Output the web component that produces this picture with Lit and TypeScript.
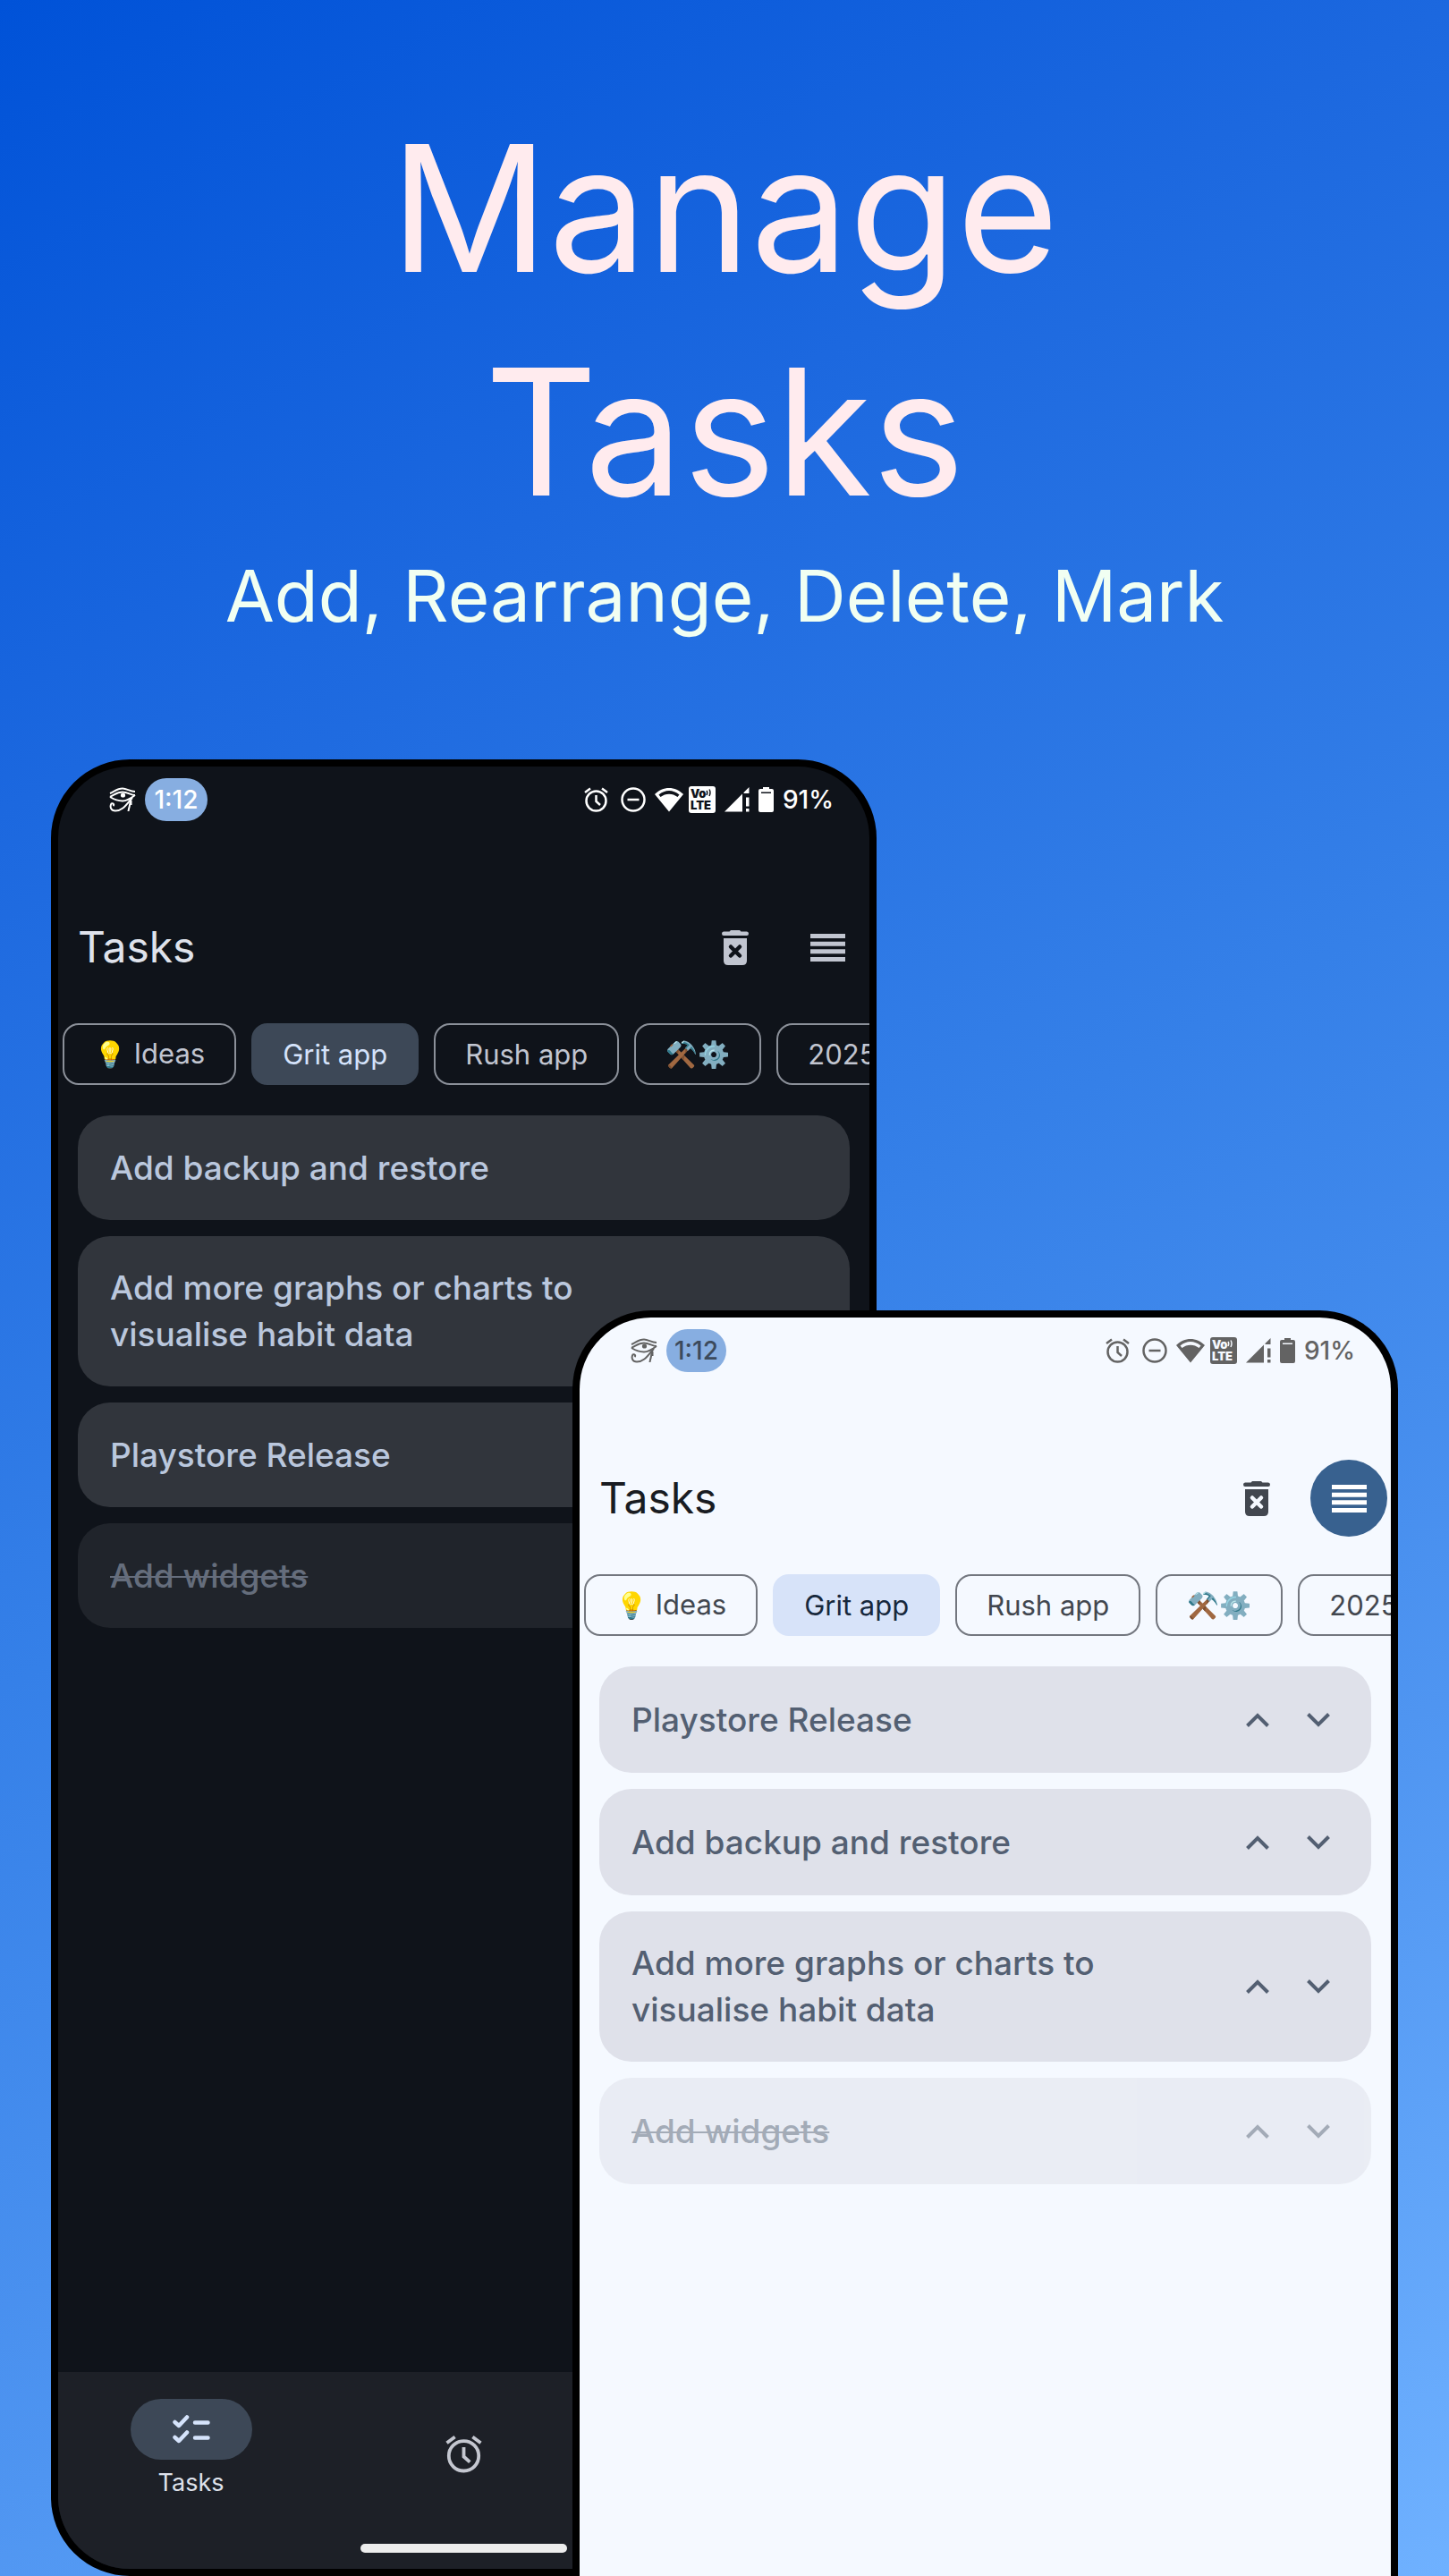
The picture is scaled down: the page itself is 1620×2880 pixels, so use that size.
import { LitElement, html, css, svg } from "lit";
import { customElement, property } from "lit/decorators.js";
import { classMap } from "lit/directives/class-map.js";

interface Task {
  title: string;
  done?: boolean;
}

interface Category {
  emoji?: string;
  label?: string;
  selected?: boolean;
}

const eyeIcon = svg`
  <svg class="eye" viewBox="0 0 30 28" fill="none" stroke="currentColor" stroke-width="2" stroke-linecap="butt">
    <path d="M1 7C6 5 9 1.500 15 1.500C20 1.500 23 5 29 5" />
    <path d="M1 11C7 8 9 5.500 15 5.500C21 5.500 24 9 29 9" />
    <path d="M1 11C6 14 10 15.500 15 15.500C21 15.500 25 12 29 9" />
    <circle cx="15.500" cy="9" r="2.600" fill="currentColor" stroke="none" />
    <path d="M26 12C20 18 16 26.500 7 26.500C2 26.500 0.500 22 2.500 18.500C4.500 17.500 6 19.500 4.500 21" />
    <path d="M23.500 14C24.500 19 22 22 21.500 27" />
    <path d="M24.500 15L24.500 20" />
  </svg>`;

const alarmIcon = svg`
  <svg class="alarm" viewBox="0 0 27 28" fill="none" stroke="currentColor" stroke-width="2.500">
    <circle cx="13.500" cy="15.500" r="11" />
    <path d="M13.500 9V16L18 20M1 6L7 1.500M26 6L20 1.500" />
  </svg>`;

const dndIcon = svg`
  <svg class="dnd" viewBox="0 0 28 28" fill="none" stroke="currentColor" stroke-width="2.500">
    <circle cx="14" cy="14" r="12.500" />
    <path d="M7.500 14H20.500" />
  </svg>`;

const wifiIcon = svg`
  <svg class="wifi" viewBox="0 0 32 28">
    <path fill="currentColor" fill-rule="evenodd" d="M16 27.500L0 8C9 -1.500 23 -1.500 32 8ZM4.500 8.500L6.500 11C12 6.500 20 6.500 25.500 11L27.500 8.500C20.500 2.500 11.500 2.500 4.500 8.500Z" />
  </svg>`;

const signalIcon = svg`
  <svg class="signal" viewBox="0 0 28 28" fill="currentColor">
    <path d="M0 27.500L20 7.500V27.500ZM21.500 6L27.500 0V7H21.500ZM24 11.500H27.500V21.500H24ZM24 24H27.500V27.500H24Z" />
  </svg>`;

const batteryIcon = svg`
  <svg class="battery" viewBox="0 0 17 28">
    <path fill="currentColor" fill-rule="evenodd" d="M5 0H12V2H15Q17 2 17 4V26Q17 28 15 28H2Q0 28 0 26V4Q0 2 2 2H5ZM3 5.500V7H14V5.500Z" />
  </svg>`;

const trashIcon = svg`
  <svg class="trash" viewBox="0 0 30 39">
    <path fill="currentColor" d="M2 1.500H8.500L10 0H20L21.500 1.500H28Q30 2 30 3.700Q30 6 28 6H2Q0 6 0 3.700Q0 2 2 1.500Z" />
    <path fill="currentColor" d="M2 9H28V34Q28 39 23 39H7Q2 39 2 34Z" />
    <path class="cross" d="M10 18.500L20 28.500M20 18.500L10 28.500" fill="none" stroke-width="4.500" stroke-linecap="round" />
  </svg>`;

const listIcon = svg`
  <svg class="list" viewBox="0 0 39 31" fill="currentColor">
    <path d="M0 0H39V5H0ZM0 8.700H39V13.700H0ZM0 17.300H39V22.300H0ZM0 26H39V31H0Z" />
  </svg>`;

const checklistIcon = svg`
  <svg class="checklist" viewBox="0 0 42 32" fill="none" stroke="currentColor" stroke-width="4.500" stroke-linecap="round" stroke-linejoin="round">
    <path d="M2.500 8L7 12L16 2.500M2.500 25L7 29L16 19.500" />
    <path d="M25 8.500H39.500M25 25.500H39.500" />
  </svg>`;

const chevron = (up: boolean) => svg`
  <svg class="chevron" viewBox="0 0 26 16" fill="none" stroke="currentColor" stroke-width="4">
    <path d=${up ? "M1.500 14.500L13 3L24.500 14.500" : "M1.500 1.500L13 13L24.500 1.500"} />
  </svg>`;

@customElement("phone-screen")
export class PhoneScreen extends LitElement {
  @property() theme: "dark" | "light" = "dark";
  @property({ type: Boolean }) reordering = false;
  @property({ type: Boolean }) cropped = false;
  @property({ attribute: false }) tasks: Task[] = [];

  private categories: Category[] = [
    { emoji: "💡", label: "Ideas" },
    { label: "Grit app", selected: true },
    { label: "Rush app" },
    { emoji: "⚒️⚙️" },
    { label: "2025" },
  ];

  static styles = css`
    :host {
      display: flex;
      min-width: 0;
      min-height: 0;
      isolation: isolate;
      font-family: Inter, "Noto Sans", sans-serif;
    }
    .phone {
      --screen: #0f131a;
      --text: #dfe2eb;
      --muted: #c1c5d0;
      --label: #c1c5d0;
      --outline: #8b9099;
      --chip: #3d4857;
      --chip-text: #d5e3fb;
      --card: #31353c;
      --card-text: #bac7dd;
      --status: #ffffff;
      --clock: #ffffff;
      flex: 1;
      min-width: 0;
      display: flex;
      flex-direction: column;
      box-sizing: border-box;
      overflow: hidden;
      border: 8px solid #000;
      border-radius: 88px;
      background: var(--screen);
      color: var(--text);
    }
    .light {
      --screen: #f5f9ff;
      --text: #191c22;
      --muted: #42474f;
      --label: #42474f;
      --outline: #73777f;
      --chip: #d7e3f9;
      --chip-text: #17283c;
      --card: #dfe1ea;
      --card-text: #535f72;
      --status: #636363;
      --clock: #3c4a5c;
    }
    .cropped {
      border-bottom: 0;
      border-radius: 88px 88px 0 0;
    }
    button {
      margin: 0;
      padding: 0;
      border: 0;
      background: none;
      color: inherit;
      font: inherit;
      flex: none;
    }
    svg {
      display: block;
      flex: none;
    }
    .status {
      display: flex;
      align-items: center;
      justify-content: space-between;
      height: 48px;
      padding: 13px 40px 0 57px;
      color: var(--status);
      font-size: 28px;
      font-weight: 500;
    }
    .status-side {
      display: flex;
      align-items: center;
      gap: 10px;
    }
    .clock {
      display: flex;
      align-items: center;
      justify-content: center;
      width: 70px;
      height: 48px;
      border-radius: 24px;
      background: #87aee1;
      color: var(--clock);
    }
    .light .clock {
      width: 67px;
    }
    .eye { width: 30px; height: 28px; }
    .alarm { width: 27px; height: 28px; }
    .dnd { width: 28px; height: 28px; margin-left: 4px; }
    .wifi { width: 32px; height: 28px; }
    .signal { width: 28px; height: 28px; }
    .battery { width: 17px; height: 28px; }
    .volte {
      display: flex;
      flex-direction: column;
      justify-content: center;
      box-sizing: border-box;
      width: 30px;
      height: 30px;
      margin-left: -4px;
      padding-left: 2px;
      border-radius: 3px;
      background: var(--status);
      color: var(--screen);
      font-size: 13px;
      font-weight: 900;
      line-height: 13px;
    }
    .volte-top {
      display: flex;
    }
    .waves { width: 8px; height: 10px; }
    .toolbar {
      display: flex;
      align-items: center;
      justify-content: space-between;
      height: 86px;
      padding: 98px 4px 0 22px;
    }
    h2 {
      margin: 0;
      font-size: 48px;
      font-weight: 400;
      line-height: 60px;
    }
    .actions {
      display: flex;
      align-items: center;
      gap: 17px;
      color: var(--muted);
    }
    .round {
      display: grid;
      place-items: center;
      width: 86px;
      height: 86px;
      border-radius: 50%;
    }
    .round.active {
      background: #38618f;
      color: #fff;
    }
    .trash { width: 30px; height: 39px; }
    .cross { stroke: var(--screen); }
    .list { width: 39px; height: 31px; }
    .chips {
      display: flex;
      gap: 17px;
      padding: 42px 0 0 5px;
      overflow: hidden;
    }
    .chip {
      box-sizing: border-box;
      height: 69px;
      padding: 0 33px;
      border: 2px solid var(--outline);
      border-radius: 18px;
      color: var(--label);
      font-size: 31px;
      line-height: 40px;
      white-space: nowrap;
    }
    .chip.selected {
      border-color: var(--chip);
      background: var(--chip);
      color: var(--chip-text);
    }
    .emoji {
      font-size: 29px;
    }
    ul {
      display: flex;
      flex-direction: column;
      gap: 18px;
      margin: 0;
      padding: 34px 22px 0;
      list-style: none;
    }
    .task {
      display: flex;
      align-items: center;
      box-sizing: border-box;
      min-height: 117px;
      padding: 32px 25px 32px 36px;
      border-radius: 36px;
      background: var(--card);
      color: var(--card-text);
      font-size: 37px;
      font-weight: 500;
      line-height: 52px;
    }
    .movable {
      min-height: 119px;
    }
    .done {
      opacity: 0.5;
    }
    .done .name {
      text-decoration: line-through;
      text-decoration-thickness: 2px;
    }
    .name {
      flex: 1;
      max-width: 580px;
    }
    .moves {
      display: flex;
      margin-left: auto;
    }
    .move {
      display: grid;
      place-items: center;
      width: 68px;
      height: 52px;
    }
    .chevron { width: 26px; height: 16px; }
    .bottom {
      display: flex;
      flex-direction: column;
      align-items: center;
      justify-content: space-between;
      box-sizing: border-box;
      height: 220px;
      margin-top: auto;
      padding-bottom: 18px;
      background: #1d2027;
    }
    nav {
      display: grid;
      grid-template-columns: repeat(3, 1fr);
      gap: 8px;
      width: 100%;
      height: 182px;
      color: #c4c7d0;
    }
    .tab {
      display: flex;
      flex-direction: column;
      align-items: center;
      justify-content: center;
      gap: 8px;
      font-size: 27px;
      line-height: 36px;
    }
    .tab.current {
      padding-bottom: 10px;
      color: #dfe2eb;
    }
    .indicator {
      display: grid;
      place-items: center;
      width: 136px;
      height: 68px;
      border-radius: 34px;
      background: #3d4857;
      color: #d5e3fb;
    }
    .checklist { width: 42px; height: 32px; }
    .tab .alarm { width: 41px; height: 43px; }
    .handle {
      width: 231px;
      height: 10px;
      border-radius: 5px;
      background: #ededed;
    }
  `;

  private renderTask(task: Task) {
    return html`
      <li class=${classMap({ task: true, done: !!task.done, movable: this.reordering })}>
        <span class="name">${task.title}</span>
        ${this.reordering
          ? html`<span class="moves">
              <button class="move" aria-label="Move up">${chevron(true)}</button>
              <button class="move" aria-label="Move down">${chevron(false)}</button>
            </span>`
          : null}
      </li>
    `;
  }

  private renderCategory({ emoji, label, selected }: Category) {
    const icon = emoji ? html`<span class="emoji">${emoji}</span>` : null;
    return html`<button class=${classMap({ chip: true, selected: !!selected })}>${icon}${emoji && label ? " " : null}${label}</button>`;
  }

  render() {
    return html`
      <article class=${classMap({ phone: true, light: this.theme === "light", cropped: this.cropped })}>
        <div class="status">
          <div class="status-side">${eyeIcon}<span class="clock">1:12</span></div>
          <div class="status-side">
            ${alarmIcon}${dndIcon}${wifiIcon}
            <span class="volte">
              <span class="volte-top">Vo<svg class="waves" viewBox="0 0 8 10" fill="none" stroke="currentColor" stroke-width="1.500"><path d="M1 3Q2.500 5 1 8M4 1.500Q6 5 4 9" /></svg></span>
              <span>LTE</span>
            </span>
            ${signalIcon}${batteryIcon}
            <span>91%</span>
          </div>
        </div>
        <header class="toolbar">
          <h2>Tasks</h2>
          <div class="actions">
            <button class="round" aria-label="Delete completed">${trashIcon}</button>
            <button class=${classMap({ round: true, active: this.reordering })} aria-label="Reorder">${listIcon}</button>
          </div>
        </header>
        <div class="chips">${this.categories.map((category) => this.renderCategory(category))}</div>
        <ul>
          ${this.tasks.map((task) => this.renderTask(task))}
        </ul>
        ${this.cropped
          ? null
          : html`<footer class="bottom">
              <nav>
                <button class="tab current"><span class="indicator">${checklistIcon}</span>Tasks</button>
                <button class="tab" aria-label="Alarms">${alarmIcon}</button>
              </nav>
              <div class="handle"></div>
            </footer>`}
      </article>
    `;
  }
}

@customElement("app-root")
export class AppRoot extends LitElement {
  static styles = css`
    :host {
      display: block;
      font-family: Inter, "Noto Sans", sans-serif;
    }
    .poster {
      display: flex;
      flex-direction: column;
      height: 100vh;
      min-height: 2200px;
      overflow: hidden;
      background: linear-gradient(151deg, #0052d8, #1c68df 24%, #3580e8 50%, #4f95f1 74%, #6fb1ff);
      text-align: center;
    }
    .hero {
      box-sizing: border-box;
      height: 849px;
      padding-top: 108px;
    }
    h1 {
      margin: 0;
      color: #ffebee;
      font-size: 196px;
      font-weight: 400;
      line-height: 250px;
    }
    p {
      margin: 0;
      color: #f1fff2;
      font-size: 80px;
      line-height: 116px;
    }
    .stage {
      flex: 1;
      min-height: 0;
      display: grid;
      grid-template-columns: 57fr 583fr 340fr 583fr 57fr;
      grid-template-rows: 616px minmax(0, 1fr);
      text-align: left;
    }
    .back {
      grid-column: 2 / 4;
      grid-row: 1 / 3;
    }
    .front {
      grid-column: 3 / 5;
      grid-row: 2;
    }
  `;

  private darkTasks: Task[] = [
    { title: "Add backup and restore" },
    { title: "Add more graphs or charts to visualise habit data" },
    { title: "Playstore Release" },
    { title: "Add widgets", done: true },
  ];

  private lightTasks: Task[] = [
    { title: "Playstore Release" },
    { title: "Add backup and restore" },
    { title: "Add more graphs or charts to visualise habit data" },
    { title: "Add widgets", done: true },
  ];

  render() {
    return html`
      <main class="poster">
        <header class="hero">
          <h1>Manage<br />Tasks</h1>
          <p>Add, Rearrange, Delete, Mark</p>
        </header>
        <section class="stage">
          <phone-screen class="back" theme="dark" .tasks=${this.darkTasks}></phone-screen>
          <phone-screen class="front" theme="light" reordering cropped .tasks=${this.lightTasks}></phone-screen>
        </section>
      </main>
    `;
  }
}
